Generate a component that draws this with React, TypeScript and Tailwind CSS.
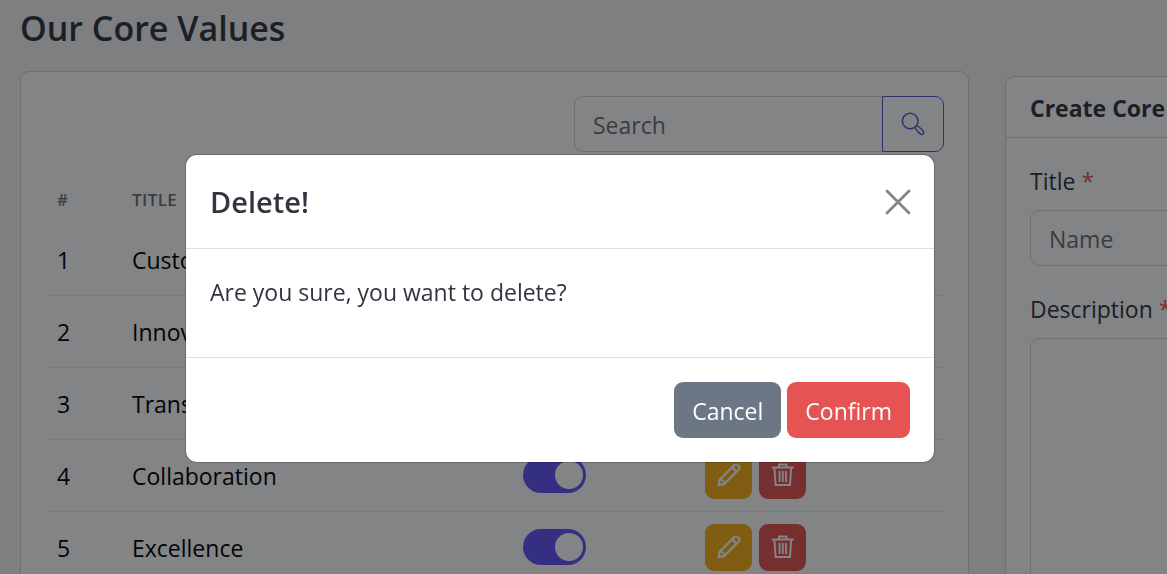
import React from 'react';

const values = [
  { id: 1, title: 'Customer Focus' },
  { id: 2, title: 'Innovation' },
  { id: 3, title: 'Transparency' },
  { id: 4, title: 'Collaboration' },
  { id: 5, title: 'Excellence' },
];

function SearchIcon() {
  return (
    <svg viewBox="0 0 24 24" className="size-6" fill="none" stroke="currentColor" strokeWidth="1.5" aria-hidden="true">
      <circle cx="9.2" cy="9" r="7.8" />
      <path d="M14.4 14.6 L16 13.9 C17 13.6 22 18.4 22.6 19.9 C23.1 21.6 21.6 23 20 22.4 C18.6 21.8 14.6 17.4 14.4 16 Z" />
    </svg>
  );
}

function PencilIcon() {
  return (
    <svg viewBox="0 0 24 24" className="size-6" fill="none" stroke="currentColor" strokeWidth="2.2" strokeLinejoin="round" aria-hidden="true">
      <path d="M1.6 22.2 L2.6 16.8 L17 2.4 C18.2 1.2 20.2 1.2 21.5 2.5 C22.8 3.8 22.8 5.6 21.6 6.8 L7.2 21 Z" />
      <path d="M2.6 16.8 C5.4 16.4 7.6 18.4 7.2 21.2 M15 4.2 L19.6 8.8" />
      <path d="M1 23 L1.8 19 L5 22.2 Z" fill="currentColor" stroke="none" />
    </svg>
  );
}

function TrashIcon() {
  return (
    <svg viewBox="0 0 24 24" className="size-6" fill="none" stroke="currentColor" strokeWidth="2" aria-hidden="true">
      <path d="M.8 4.5 H22.8 M8 4.5 V1.5 H15.6 V4.5 M3.4 4.5 L4.6 22 H19 L20.2 4.5" />
      <path strokeWidth="1.9" d="M8.6 8 V19 M11.8 8 V19 M15 8 V19" />
    </svg>
  );
}

function ValuesCard() {
  return (
    <section className="mt-[-5px] rounded-[9px] border border-[#d2d4da] bg-white p-6">
      <form className="ml-auto flex h-14 w-[370px]" onSubmit={(e) => e.preventDefault()}>
        <input
          type="text"
          aria-label="Search"
          placeholder="Search"
          className="min-w-0 flex-1 rounded-l-[9px] border border-r-0 border-[#d2d4da] bg-white px-[18px] pt-0.5 placeholder:text-[#6b7079]"
        />
        <button type="submit" aria-label="Search" className="flex w-[62px] items-center justify-center rounded-r-[9px] border border-[#5856d6] text-[#5856d6]">
          <SearchIcon />
        </button>
      </form>
      <table className="mt-6 w-full table-fixed text-left text-black">
        <colgroup>
          <col className="w-[75px]" />
          <col />
          <col className="w-[182px]" />
          <col className="w-[251px]" />
        </colgroup>
        <thead>
          <tr className="h-[47px] text-[17px] tracking-wide text-[#6b7079]">
            <th className="px-3 font-semibold">#</th>
            <th className="px-3 font-semibold">TITLE</th>
            <th className="px-3 font-semibold">STATUS</th>
            <th className="px-3 font-semibold">ACTION</th>
          </tr>
        </thead>
        <tbody>
          {values.map((v) => (
            <tr key={v.id} className="h-[72px] border-b border-[#eff0f3]">
              <td className="px-3 pt-0.5">{v.id}</td>
              <td className="px-3 pt-0.5">{v.title}</td>
              <td className="px-3">
                <label className="relative block h-9 w-[63px]">
                  <input type="checkbox" defaultChecked aria-label={`${v.title} active`} className="peer absolute inset-0 size-full appearance-none rounded-full bg-[#b0b4bb] checked:bg-[#6254fc]" />
                  <span className="pointer-events-none absolute top-1 left-1 size-7 rounded-full bg-white peer-checked:left-8" />
                </label>
              </td>
              <td className="px-3">
                <div className="flex gap-[7px] text-white">
                  <button aria-label={`Edit ${v.title}`} className="flex size-[47px] items-center justify-center rounded-[9px] bg-[#f9b115]">
                    <PencilIcon />
                  </button>
                  <button aria-label={`Delete ${v.title}`} className="flex size-[47px] items-center justify-center rounded-[9px] bg-[#e55353]">
                    <TrashIcon />
                  </button>
                </div>
              </td>
            </tr>
          ))}
        </tbody>
      </table>
    </section>
  );
}

function CreateCard() {
  return (
    <section className="min-w-[472px] rounded-[9px] border border-[#d2d4da] bg-white">
      <h2 className="border-b border-[#d2d4da] px-6 pt-[13px] pb-[11px] leading-9 font-bold">Create Core Values</h2>
      <form className="px-6 pt-[25px] pb-6" onSubmit={(e) => e.preventDefault()}>
        <label htmlFor="title" className="mb-[11px] block leading-9">
          Title <span className="text-[#e55353]">*</span>
        </label>
        <input id="title" type="text" placeholder="Name" className="block h-14 w-full rounded-[9px] border border-[#d2d4da] px-[18px] pt-0.5 placeholder:text-[#6b7079]" />
        <label htmlFor="description" className="mt-[25px] mb-[11px] block leading-9">
          Description <span className="text-[#e55353]">*</span>
        </label>
        <textarea id="description" rows={8} className="block w-full rounded-[9px] border border-[#d2d4da] p-[18px]" />
      </form>
    </section>
  );
}

function DeleteDialog() {
  return (
    <div className="fixed inset-0 flex items-start justify-center bg-[#080a0c]/50 pt-[154px] pr-[47px]">
      <div role="dialog" aria-modal="true" aria-labelledby="dialog-title" className="w-full max-w-[750px] rounded-xl border border-[#080a0c]/20 bg-white bg-clip-padding">
        <header className="flex items-center justify-between border-b border-[#dbdfe6] p-6">
          <h2 id="dialog-title" className="text-[29px] leading-[45px] font-semibold">Delete!</h2>
          <button aria-label="Close" className="text-[#848586]">
            <svg viewBox="0 0 24 24" className="size-6" fill="none" stroke="currentColor" strokeWidth="2.8" strokeLinecap="round" overflow="visible" aria-hidden="true">
              <path d="M1 1 L23 23 M23 1 L1 23" />
            </svg>
          </button>
        </header>
        <div className="border-b border-[#dbdfe6] px-6 pt-[25px] pb-[23px]">
          <p className="mb-6 leading-9">Are you sure, you want to delete?</p>
        </div>
        <footer className="flex justify-end gap-1.5 p-6 text-white">
          <button className="h-14 rounded-[9px] bg-[#6b7785] px-[18px] pt-0.5">Cancel</button>
          <button className="h-14 rounded-[9px] bg-[#e55353] px-[18px] pt-0.5">Confirm</button>
        </footer>
      </div>
    </div>
  );
}

export default function App() {
  return (
    <div className="h-screen overflow-hidden bg-[#f3f4f7] pl-5 font-['Open_Sans','Noto_Sans',sans-serif] text-[23px] text-[#30353f]">
      <h1 className="pt-1 text-[34px] leading-[48px] font-semibold">Our Core Values</h1>
      <div className="mt-6 grid grid-cols-[minmax(0,1fr)_162px] items-start gap-9">
        <ValuesCard />
        <CreateCard />
      </div>
      <DeleteDialog />
    </div>
  );
}
